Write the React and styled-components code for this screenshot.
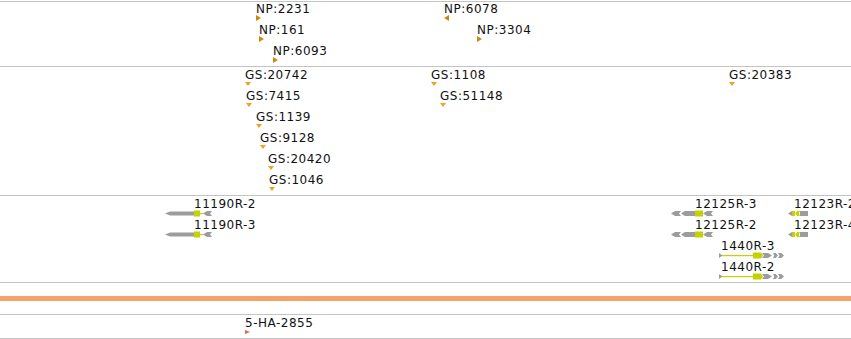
import React from 'react';
import styled, { createGlobalStyle } from 'styled-components';

const GlobalStyle = createGlobalStyle`
  html, body { margin: 0; padding: 0; background: #ffffff; }
  body { font-family: "DejaVu Sans", Verdana, sans-serif; }
`;

const GRAY = '#9c9c9c';
const CDS = '#c4d200';
const LINE = '#c4c4c4';

const Browser = styled.div`
  width: 851px;
  height: 339px;
  overflow: hidden;
  padding-top: 1px;
  box-sizing: border-box;
  display: flex;
  flex-direction: column;
`;

const Track = styled.section`
  position: relative;
  flex: none;
  height: ${(p) => p.$h}px;
  border-bottom: 1px solid ${LINE};
  ${(p) => (p.$first ? `border-top: 1px solid ${LINE};` : '')}
`;

const Spacer = styled.div`
  flex: none;
  height: 31px;
  display: flex;
  align-items: center;
  border-bottom: 1px solid ${LINE};
`;

const Band = styled.div`
  width: 100%;
  height: 5px;
  background: #f5a36c;
`;

const Feature = styled.div.attrs((p) => ({
  style: { left: `${p.$x}px`, top: `${p.$y}px` },
}))`
  position: absolute;
  display: flex;
  flex-direction: column;
  align-items: flex-start;
`;

const Label = styled.span`
  display: block;
  font-size: 12px;
  line-height: 12px;
  letter-spacing: 0.5px;
  color: #111;
  white-space: nowrap;
  margin-left: ${(p) => p.$indent || 0}px;
`;

const Marker = styled.span`
  display: block;
  width: 0;
  height: 0;
  margin-top: ${(p) => p.$gap || 0}px;
  ${(p) =>
    p.$dir === 'down'
      ? `border-top: 4.5px solid ${p.$color};
         border-left: 3px solid transparent;
         border-right: 3px solid transparent;`
      : p.$dir === 'left'
      ? `border-right: 5px solid ${p.$color};
         border-top: 3px solid transparent;
         border-bottom: 3px solid transparent;`
      : `border-left: 5px solid ${p.$color};
         border-top: ${p.$half || 3}px solid transparent;
         border-bottom: ${p.$half || 3}px solid transparent;`}
`;

const GeneSvg = styled.svg`
  display: block;
  overflow: visible;
`;

const NP_COLOR = '#c98a0c';
const GS_COLOR = '#f0a224';
const HA_COLOR = '#f2603e';

const npFeatures = [
  { name: 'NP:2231', x: 256, y: 1, dir: 'right' },
  { name: 'NP:161', x: 259, y: 22, dir: 'right' },
  { name: 'NP:6093', x: 273, y: 43, dir: 'right' },
  { name: 'NP:6078', x: 444, y: 1, dir: 'left' },
  { name: 'NP:3304', x: 477, y: 22, dir: 'right' },
];

const gsFeatures = [
  { name: 'GS:20742', x: 245, y: 2 },
  { name: 'GS:7415', x: 246, y: 23 },
  { name: 'GS:1139', x: 256, y: 44 },
  { name: 'GS:9128', x: 260, y: 65 },
  { name: 'GS:20420', x: 268, y: 86 },
  { name: 'GS:1046', x: 269, y: 107 },
  { name: 'GS:1108', x: 431, y: 2 },
  { name: 'GS:51148', x: 440, y: 23 },
  { name: 'GS:20383', x: 729, y: 2 },
];

const g11190 = {
  w: 47,
  parts: [
    { t: 'ltip', x: 0, w: 5, h: 4, c: 'g' },
    { t: 'rect', x: 5, w: 24, h: 4, c: 'g' },
    { t: 'rect', x: 29, w: 6, h: 6, c: 'y' },
    { t: 'line', x: 35, w: 3, c: 'y' },
    { t: 'larrow', x: 38, w: 9, h: 5, c: 'g' },
  ],
};

const g12125 = {
  w: 42,
  parts: [
    { t: 'larrow', x: 0, w: 10, h: 5, c: 'g' },
    { t: 'ltip', x: 10, w: 4, h: 5, c: 'g' },
    { t: 'rect', x: 14, w: 10, h: 5, c: 'g' },
    { t: 'rect', x: 24, w: 8, h: 6, c: 'y' },
    { t: 'larrow', x: 32, w: 10, h: 5, c: 'g' },
  ],
};

const g12123 = {
  w: 20,
  parts: [
    { t: 'ltip', x: 0, w: 4, h: 5, c: 'g' },
    { t: 'rect', x: 4, w: 3, h: 5, c: 'y' },
    { t: 'larrow', x: 7, w: 5, h: 5, c: 'y' },
    { t: 'rect', x: 12, w: 8, h: 5, c: 'g' },
  ],
};

const g1440 = {
  w: 65,
  parts: [
    { t: 'rtip', x: 0, w: 3.5, h: 5, c: 'g' },
    { t: 'line', x: 3, w: 31, c: 'y' },
    { t: 'rect', x: 34, w: 8, h: 6, c: 'y' },
    { t: 'rtip', x: 42, w: 2, h: 6, c: 'y' },
    { t: 'rarrow', x: 43, w: 10, h: 5, c: 'g' },
    { t: 'rarrow', x: 54, w: 5, h: 5, c: 'g' },
    { t: 'rarrow', x: 59, w: 6, h: 5, c: 'g' },
  ],
};

const genes = [
  { name: '11190R-2', x: 165, y: 2, indent: 29, glyph: g11190 },
  { name: '11190R-3', x: 165, y: 23, indent: 29, glyph: g11190 },
  { name: '12125R-3', x: 671, y: 2, indent: 24, glyph: g12125 },
  { name: '12125R-2', x: 671, y: 23, indent: 24, glyph: g12125 },
  { name: '12123R-2', x: 788, y: 2, indent: 6, glyph: g12123 },
  { name: '12123R-4', x: 788, y: 23, indent: 6, glyph: g12123 },
  { name: '1440R-3', x: 719, y: 44, indent: 2, glyph: g1440 },
  { name: '1440R-2', x: 719, y: 65, indent: 2, glyph: g1440 },
];

function Part({ p }) {
  const c = 3.5;
  const h = p.h || 5;
  const t = c - h / 2;
  const b = c + h / 2;
  const fill = p.c === 'y' ? CDS : GRAY;
  const x = p.x;
  const w = p.w;
  switch (p.t) {
    case 'rect':
      return <rect x={x} y={t} width={w} height={h} fill={fill} />;
    case 'line':
      return <rect x={x} y={3} width={w} height={1.2} fill={fill} />;
    case 'ltip':
      return <polygon points={`${x},${c} ${x + w},${t} ${x + w},${b}`} fill={fill} />;
    case 'rtip':
      return <polygon points={`${x},${t} ${x + w},${c} ${x},${b}`} fill={fill} />;
    case 'larrow': {
      const tip = Math.min(4, w * 0.45);
      const notch = Math.min(2, w * 0.25);
      return (
        <polygon
          points={`${x},${c} ${x + tip},${t} ${x + w},${t} ${x + w - notch},${c} ${x + w},${b} ${x + tip},${b}`}
          fill={fill}
        />
      );
    }
    case 'rarrow': {
      const tip = Math.min(4, w * 0.45);
      const notch = Math.min(2, w * 0.25);
      return (
        <polygon
          points={`${x},${t} ${x + w - tip},${t} ${x + w},${c} ${x + w - tip},${b} ${x},${b} ${x + notch},${c}`}
          fill={fill}
        />
      );
    }
    default:
      return null;
  }
}

function GeneGlyph({ glyph }) {
  return (
    <GeneSvg width={glyph.w} height={7} viewBox={`0 0 ${glyph.w} 7`}>
      {glyph.parts.map((p, i) => (
        <Part key={i} p={p} />
      ))}
    </GeneSvg>
  );
}

export default function App() {
  return (
    <>
      <GlobalStyle />
      <Browser>
        <Track $first $h={64}>
          {npFeatures.map((f) => (
            <Feature key={f.name} $x={f.x} $y={f.y}>
              <Label>{f.name}</Label>
              <Marker $dir={f.dir} $color={NP_COLOR} />
            </Feature>
          ))}
        </Track>
        <Track $h={128}>
          {gsFeatures.map((f) => (
            <Feature key={f.name} $x={f.x} $y={f.y}>
              <Label>{f.name}</Label>
              <Marker $dir="down" $color={GS_COLOR} $gap={1} />
            </Feature>
          ))}
        </Track>
        <Track $h={86}>
          {genes.map((g) => (
            <Feature key={g.name} $x={g.x} $y={g.y}>
              <Label $indent={g.indent}>{g.name}</Label>
              <GeneGlyph glyph={g.glyph} />
            </Feature>
          ))}
        </Track>
        <Spacer>
          <Band />
        </Spacer>
        <Track $h={23}>
          <Feature $x={245} $y={2}>
            <Label>5-HA-2855</Label>
            <Marker $dir="right" $color={HA_COLOR} $half={2.5} $gap={1} />
          </Feature>
        </Track>
      </Browser>
    </>
  );
}
